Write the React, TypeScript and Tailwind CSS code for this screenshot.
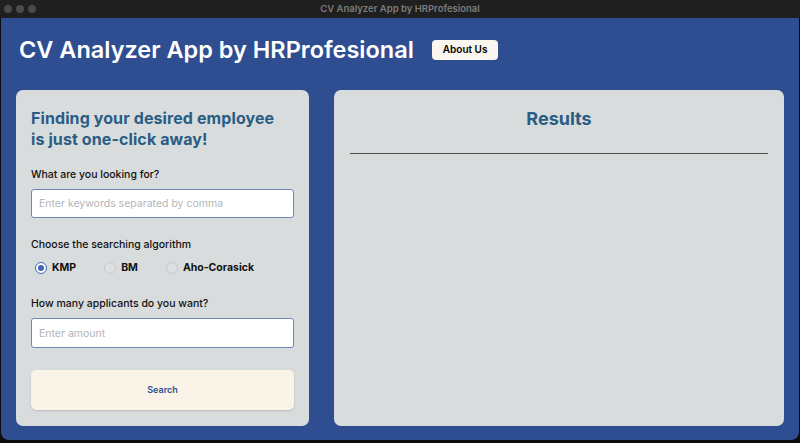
import React from 'react';

const font = { fontFamily: 'Inter, "Noto Sans", sans-serif' };

type Algo = 'KMP' | 'BM' | 'Aho-Corasick';

// Single radio option with a custom drawn circle
const Radio: React.FC<{ label: Algo; checked: boolean; onChange: () => void }> = ({ label, checked, onChange }) => (
  <label className="flex items-center gap-[5px] cursor-pointer" onClick={onChange}>
    <span
      className={`w-[12px] h-[12px] rounded-full border flex items-center justify-center ${
        checked ? 'border-[#3f66b3] bg-white' : 'border-[#c4c8cc] bg-[#dde0e1]'
      }`}
    >
      {checked && <span className="w-[6px] h-[6px] rounded-full bg-[#3f66b3]" />}
    </span>
    <span className="text-[10.5px] font-bold text-[#111]">{label}</span>
  </label>
);

export default function App() {
  const [algo, setAlgo] = React.useState<Algo>('KMP');
  const algos: Algo[] = ['KMP', 'BM', 'Aho-Corasick'];

  return (
    <div className="w-[800px] h-[443px] bg-[#0d0d0d] flex flex-col overflow-hidden" style={font}>
      {/* macOS window title bar */}
      <div className="h-[18px] shrink-0 bg-[#1f1f1f] flex items-center relative px-[4px]">
        <div className="flex gap-[4px]">
          <span className="w-[8px] h-[8px] rounded-full bg-[#4b4b4b]" />
          <span className="w-[8px] h-[8px] rounded-full bg-[#4b4b4b]" />
          <span className="w-[8px] h-[8px] rounded-full bg-[#4b4b4b]" />
        </div>
        <div className="flex-1 text-center text-[9.5px] font-semibold text-[#7c7c7c] -ml-[32px]">
          CV Analyzer App by HRProfesional
        </div>
      </div>

      {/* App body */}
      <div className="h-[422px] shrink-0 bg-[#2f4e91] rounded-b-[8px] ml-[1px] mr-[1px] flex flex-col px-[15px] pb-[14px]">
        {/* Header */}
        <div className="flex items-center gap-[18px] pl-[3px] h-[73px] pb-[9px]">
          <h1 className="text-[23.5px] font-semibold text-white">CV Analyzer App by HRProfesional</h1>
          <button className="h-[20px] px-[11px] rounded-[4px] bg-[#faf5ee] text-[10px] font-semibold text-black">
            About Us
          </button>
        </div>

        <div className="flex-1 flex gap-[25px]">
          {/* Search form panel */}
          <div className="w-[293px] bg-[#d9dcdd] rounded-[7px] px-[15px] pt-[18px] pb-[16px] flex flex-col">
            <h2 className="text-[16px] leading-[21px] font-bold text-[#2a5d84] tracking-[0.1px]">
              Finding your desired employee
              <br />
              is just one-click away!
            </h2>

            <p className="mt-[17px] text-[10.5px] leading-[16px] font-medium text-[#111]">What are you looking for?</p>
            <input
              className="mt-[6px] h-[29px] w-full rounded-[3px] border border-[#6f86b9] bg-white px-[7px] text-[10.5px] outline-none placeholder:text-[#b3b5b8]"
              placeholder="Enter keywords separated by comma"
            />

            <p className="mt-[19px] text-[10.5px] leading-[16px] font-medium text-[#111]">Choose the searching algorithm</p>
            <div className="mt-[7px] h-[16px] flex items-center gap-[28px] pl-[4px]">
              {algos.map(a => (
                <Radio key={a} label={a} checked={algo === a} onChange={() => setAlgo(a)} />
              ))}
            </div>

            <p className="mt-[20px] text-[10.5px] leading-[16px] font-medium text-[#111]">How many applicants do you want?</p>
            <input
              className="mt-[6px] h-[30px] w-full rounded-[3px] border border-[#6f86b9] bg-white px-[7px] text-[10.5px] outline-none placeholder:text-[#b3b5b8]"
              placeholder="Enter amount"
            />

            <button className="mt-[22px] h-[40px] w-full rounded-[5px] bg-[#faf3e8] text-[9px] font-semibold text-[#2f4e91] shadow-[0_1px_2px_rgba(0,0,0,0.15)]">
              Search
            </button>
          </div>

          {/* Results panel */}
          <div className="flex-1 bg-[#d9dcdd] rounded-[7px] px-[16px] pt-[18px] flex flex-col">
            <h2 className="text-[18px] leading-[22px] font-bold text-[#2a5d84] text-center">Results</h2>
            <div className="mt-[23px] h-px bg-[#4d4d4d]" />
          </div>
        </div>
      </div>
    </div>
  );
}
